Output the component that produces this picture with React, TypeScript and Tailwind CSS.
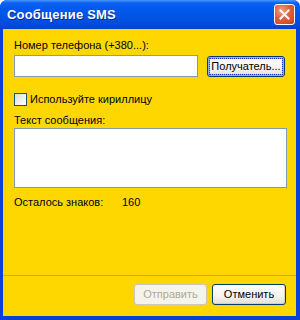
import React from "react";

const font = "font-['Liberation_Sans',Arial,sans-serif]";

function XpButton({
  children,
  disabled,
  focused,
  className = "",
}: {
  children: React.ReactNode;
  disabled?: boolean;
  focused?: boolean;
  className?: string;
}) {
  if (disabled) {
    return (
      <div
        className={`flex items-center justify-center rounded-[3px] border border-[#c9c7ba] bg-[#f5f4ea] text-[11px] text-[#aca899] ${className}`}
      >
        {children}
      </div>
    );
  }
  return (
    <div
      className={`flex items-center justify-center rounded-[3px] border border-[#003c74] bg-[linear-gradient(180deg,#ffffff_0%,#f4f3ee_60%,#e3e0d3_100%)] text-[11px] text-black ${
        focused ? "shadow-[inset_0_0_0_2px_#8db2f0]" : "shadow-[inset_-1px_-1px_0_#d6d0c5]"
      } ${className}`}
    >
      {focused ? (
        <span className="flex h-[15px] items-center px-[1px] outline outline-1 outline-dotted outline-[#3030d0]">
          {children}
        </span>
      ) : (
        children
      )}
    </div>
  );
}

export default function App() {
  return (
    <div className={`h-[320px] w-[300px] bg-white ${font}`}>
      <div className="flex h-[320px] w-[300px] flex-col overflow-hidden rounded-t-[7px] bg-[#0842d6]">
        {/* Title bar */}
        <div className="flex h-[29px] shrink-0 items-center justify-between bg-[linear-gradient(180deg,#4a98ff_0%,#0a62f2_10%,#0058ee_30%,#0054e3_60%,#0349d9_88%,#0a3fc8_100%)] pl-[7px] pr-[5px]">
          <span className="text-[13px] font-bold tracking-[0.2px] text-white [text-shadow:1px_1px_0_#0b2a8a]">
            Сообщение SMS
          </span>
          <div className="flex h-[21px] w-[21px] items-center justify-center rounded-[3px] border border-white bg-[radial-gradient(circle_at_35%_30%,#f0a080_0%,#e0603a_45%,#c8401c_100%)]">
            <svg width="11" height="11" viewBox="0 0 11 11">
              <path d="M1.5 1.5 L9.5 9.5 M9.5 1.5 L1.5 9.5" stroke="white" strokeWidth="2" strokeLinecap="square" />
            </svg>
          </div>
        </div>

        {/* Client area */}
        <div className="ml-[3px] mr-[4px] mb-[4px] flex flex-1 flex-col bg-[#ffd700] text-[11px] text-black">
          <div className="flex flex-1 flex-col pl-[11px] pt-[10px]">
            <div className="leading-[13px]">Номер телефона (+380...):</div>
            <div className="mt-[3px] flex items-start gap-[9px]">
              <div className="h-[22px] w-[184px] border border-[#7f9db9] bg-white" />
              <XpButton focused className="mt-[1px] h-[21px] w-[78px]">
                Получатель...
              </XpButton>
            </div>

            <div className="mt-[16px] flex h-[13px] items-center gap-[3px]">
              <div className="h-[13px] w-[13px] border border-[#1c5180] bg-[linear-gradient(135deg,#dcdcd7_0%,#f2f2ee_60%,#ffffff_100%)]" />
              <span className="leading-[13px]">Используйте кириллицу</span>
            </div>

            <div className="mt-[8px] leading-[13px]">Текст сообщения:</div>
            <div className="mt-[1px] h-[60px] w-[273px] border border-[#7f9db9] bg-white" />

            <div className="mt-[8px] flex leading-[13px]">
              <span className="w-[108px]">Осталось знаков:</span>
              <span>160</span>
            </div>
          </div>

          {/* Footer */}
          <div className="h-[1px] bg-[#d9a300]" />
          <div className="flex h-[40px] justify-end gap-[5px] pr-[10px] pt-[8px]">
            <XpButton disabled className="h-[21px] w-[73px]">
              Отправить
            </XpButton>
            <XpButton className="h-[21px] w-[74px]">Отменить</XpButton>
          </div>
        </div>
      </div>
    </div>
  );
}
